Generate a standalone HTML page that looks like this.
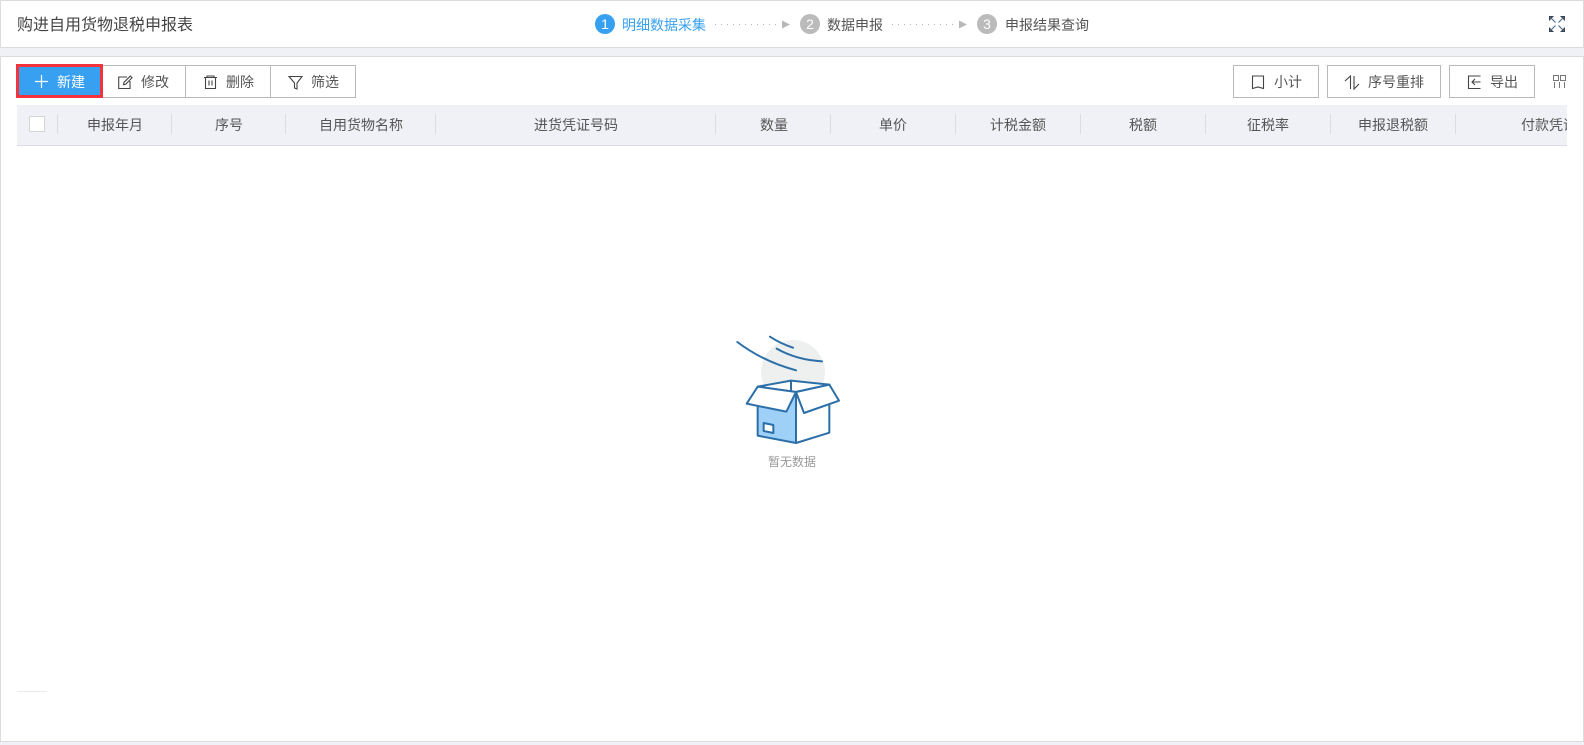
<!DOCTYPE html>
<html lang="zh">
<head>
<meta charset="utf-8">
<title>购进自用货物退税申报表</title>
<style>
html,body{margin:0;padding:0;width:1584px;height:745px;overflow:hidden;background:#f0f1f6;font-family:"Liberation Sans","Noto Sans CJK SC",sans-serif;color:#555;}
.a{position:absolute;white-space:nowrap;}
#top{position:absolute;left:0;top:0;width:1582px;height:46px;background:#fff;border:1px solid #dcdcdc;}
#main{position:absolute;left:0;top:56px;width:1582px;height:684px;background:#fff;border:1px solid #dcdcdc;}
.t{font-size:14px;line-height:20px;}
.btn{position:absolute;top:65px;height:31px;background:#fff;border:1px solid #b9b9b9;box-sizing:content-box;}
.lbl{position:absolute;top:72px;font-size:14px;line-height:20px;color:#555;white-space:nowrap;}
.th{position:absolute;top:115px;font-size:14px;line-height:20px;color:#555;white-space:nowrap;transform:translateX(-50%);}
.sep{position:absolute;top:114px;width:1px;height:20px;background:#dcdde2;}
.c{position:absolute;top:14px;width:20px;height:20px;border-radius:50%;color:#fff;font-size:14px;line-height:20px;text-align:center;}
svg{position:absolute;overflow:visible;}
</style>
</head>
<body>
<div id="top"></div>
<div class="a" style="left:17px;top:14px;font-size:16px;line-height:24px;color:#444;">购进自用货物退税申报表</div>

<div class="c" style="left:595px;background:#38a0f0;">1</div>
<div class="a t" style="left:622px;top:15px;color:#38a0f0;">明细数据采集</div>
<svg style="left:714px;top:18px;" width="80" height="12"><line x1="1" y1="6.5" x2="67" y2="6.5" stroke="#b5b5b5" stroke-dasharray="1 5"/><path d="M68 2.5L76 6.5L68 10.5Z" fill="#b8b8b8"/></svg>
<div class="c" style="left:800px;background:#bbb;">2</div>
<div class="a t" style="left:827px;top:15px;">数据申报</div>
<svg style="left:891px;top:18px;" width="80" height="12"><line x1="1" y1="6.5" x2="67" y2="6.5" stroke="#b5b5b5" stroke-dasharray="1 5"/><path d="M68 2.5L76 6.5L68 10.5Z" fill="#b8b8b8"/></svg>
<div class="c" style="left:977px;background:#bbb;">3</div>
<div class="a t" style="left:1005px;top:15px;">申报结果查询</div>

<svg style="left:1548px;top:15px;" width="18" height="18" viewBox="0 0 18 18" fill="none" stroke="#3b3f4a" stroke-width="1.2"><path d="M1 1H6L1 6ZM17 1H12L17 6ZM1 17H6L1 12ZM17 17H12L17 12Z" fill="#3b3f4a" stroke="none"/><path d="M2 2L7.5 7.5M16 2L10.500 7.500M2 16L7.500 10.500M16 16L10.500 10.500" stroke="#4a6f92"/></svg>

<div id="main"></div>

<div style="position:absolute;left:16px;top:64px;width:81px;height:28px;background:#38a0f0;border:3px solid #f5333a;"></div>
<svg style="left:34px;top:74px;" width="15" height="15"><path d="M7.500 1V14M1 7.500H14" stroke="#fff" stroke-width="1.200" fill="none"/></svg>
<div class="lbl" style="left:57px;color:#fff;">新建</div>

<div class="btn" style="left:103px;width:82px;border-left:none;"></div>
<svg style="left:118px;top:75px;" width="15" height="15" viewBox="0 0 15 15" fill="none" stroke="#444" stroke-width="1.100"><path d="M9 2H.7V13.500H12V6M5.500 9.700L6 7.300L12.300 1L14 2.700L7.700 9.200Z"/></svg>
<div class="lbl" style="left:141px;">修改</div>

<div class="btn" style="left:186px;width:84px;border-left:none;"></div>
<svg style="left:203px;top:75px;" width="15" height="15" viewBox="0 0 15 15" fill="none" stroke="#444" stroke-width="1.100"><path d="M1 2.500H14M4 2.500V1H11V2.500M2.500 2.500V13.500H12.500V2.500M6 5.500V10.500M9 5.500V10.500"/></svg>
<div class="lbl" style="left:226px;">删除</div>

<div class="btn" style="left:271px;width:84px;border-left:none;"></div>
<svg style="left:288px;top:75px;" width="15" height="16" viewBox="0 0 15 16" fill="none" stroke="#444" stroke-width="1.100"><path d="M1 1.500H14L9 8V14L6.500 13V8Z"/></svg>
<div class="lbl" style="left:311px;">筛选</div>

<div class="btn" style="left:1233px;width:84px;"></div>
<svg style="left:1251px;top:75px;" width="14" height="15" viewBox="0 0 14 15" fill="none" stroke="#444" stroke-width="1.100"><path d="M1.500 1H12.500V13.500L7 12L1.500 13.500Z"/></svg>
<div class="lbl" style="left:1274px;">小计</div>

<div class="btn" style="left:1327px;width:112px;"></div>
<svg style="left:1344px;top:75px;" width="15" height="15" viewBox="0 0 15 15" fill="none" stroke="#444" stroke-width="1.100"><path d="M1 6L6.500 1V14M10 1V14L15 9"/></svg>
<div class="lbl" style="left:1368px;">序号重排</div>

<div class="btn" style="left:1449px;width:84px;"></div>
<svg style="left:1467px;top:75px;" width="15" height="15" viewBox="0 0 15 15" fill="none" stroke="#444" stroke-width="1.100"><path d="M13.500 1H1.500V13.500H13.500M13.500 7H5M8 4L5 7L8 10"/></svg>
<div class="lbl" style="left:1490px;">导出</div>

<svg style="left:1553px;top:75px;" width="14" height="13" viewBox="0 0 14 13" fill="none" stroke="#777" stroke-width="1"><path d="M.5.5H5.500V5.500H.5ZM7.500.5H12.500V5.500H7.500ZM1.500 7V13M6.500 7V13M11.500 7V13"/></svg>

<div style="position:absolute;left:17px;top:105px;width:1550px;height:40px;background:#f0f1f6;border-bottom:1px solid #dcdde2;box-sizing:content-box;"></div>
<div style="position:absolute;left:29px;top:116px;width:14px;height:14px;background:#fff;border:1px solid #d5d5d5;"></div>
<div class="sep" style="left:57px;"></div>
<div class="sep" style="left:171px;"></div>
<div class="sep" style="left:285px;"></div>
<div class="sep" style="left:435px;"></div>
<div class="sep" style="left:715px;"></div>
<div class="sep" style="left:830px;"></div>
<div class="sep" style="left:955px;"></div>
<div class="sep" style="left:1080px;"></div>
<div class="sep" style="left:1205px;"></div>
<div class="sep" style="left:1330px;"></div>
<div class="sep" style="left:1455px;"></div>
<div class="th" style="left:115px;">申报年月</div>
<div class="th" style="left:229px;">序号</div>
<div class="th" style="left:361px;">自用货物名称</div>
<div class="th" style="left:576px;">进货凭证号码</div>
<div class="th" style="left:774px;">数量</div>
<div class="th" style="left:893px;">单价</div>
<div class="th" style="left:1018px;">计税金额</div>
<div class="th" style="left:1143px;">税额</div>
<div class="th" style="left:1268px;">征税率</div>
<div class="th" style="left:1393px;">申报退税额</div>
<div style="position:absolute;left:1456px;top:115px;width:111px;height:20px;overflow:hidden;"><div class="a t" style="left:65px;top:0;">付款凭证</div></div>

<svg style="left:710px;top:320px;" width="140" height="150" viewBox="0 0 420 450" fill="none" stroke="#2c6fa8" stroke-width="6" stroke-linejoin="round" stroke-linecap="round">
<circle cx="249" cy="156" r="96" fill="#eef0f0" stroke="none"/>
<path d="M82 66Q160 125 258 151M180 50Q210 70 249 83M200 86Q260 120 336 124"/>
<path d="M143 200L243 182L358 194L258 216Z" fill="#fff"/>
<path d="M243 182V216"/>
<path d="M143 255L258 216V369L143 347Z" fill="#9fd0f8"/>
<path d="M258 216L358 194V338L258 369Z" fill="#fff"/>
<path d="M143 200L110 251L229 275L258 216Z" fill="#fff"/>
<path d="M358 194L387 242L282 279L258 216Z" fill="#fff"/>
<path d="M161 309L190 315V339L161 333Z" fill="#fff"/>
</svg>
<div class="a" style="left:768px;top:453px;font-size:12px;line-height:18px;color:#999;">暂无数据</div>

<div style="position:absolute;left:17px;top:691px;width:30px;height:1px;background:#eaeaea;"></div>
</body>
</html>
